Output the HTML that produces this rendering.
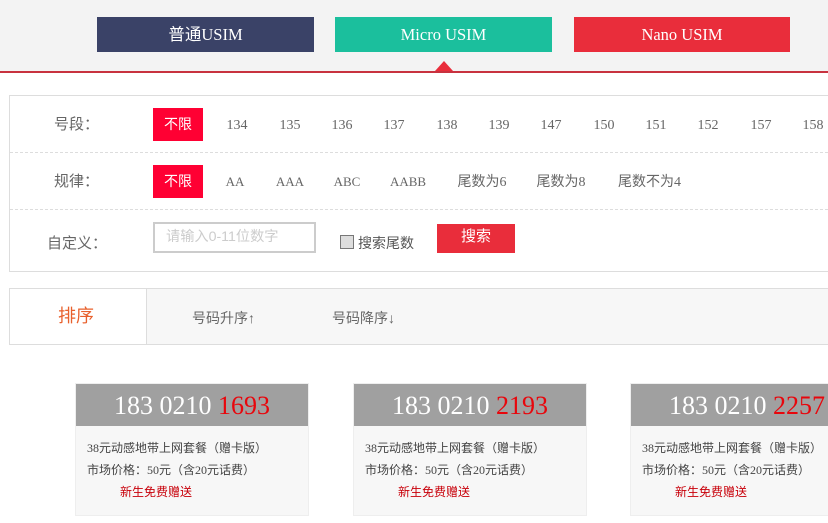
<!DOCTYPE html>
<html><head><meta charset="utf-8"><style>
html,body{margin:0;padding:0;background:#fff;}
#p{position:relative;width:828px;height:523px;overflow:hidden;background:#fff;font-family:"Liberation Serif","WenQuanYi Zen Hei","Noto Sans CJK SC",serif;color:#666;font-size:14px;}
#p div,#p span{position:absolute;white-space:nowrap;}
.t{top:17px;height:35px;line-height:36px;color:#fff;text-align:center;font-size:16.5px;}
.n{width:60px;text-align:center;font-size:14px;line-height:20px;color:#666;}
.a{top:116px;}
.b{top:173px;}
.s{font-size:13px;top:172px;}
.l{font-size:15px;line-height:20px;color:#666;}
.x{left:153px;width:50px;height:33px;line-height:36px;background:#f03;color:#fff;text-align:center;font-size:14px;}
.c{top:383px;width:232px;height:131px;background:#f7f7f7;border:1px solid #eee;}
.h{left:0;top:0;width:232px;height:42px;background:#a0a0a0;color:#fff;text-align:center;font-size:26px;line-height:43px;}
.h b{font-weight:normal;color:#e8060c;}
.c .r{left:11px;font-size:12px;line-height:18px;color:#444;}
</style></head><body><div id="p">
<div style="left:0;top:0;width:828px;height:71px;background:#f3f3f3"></div>
<div style="left:0;top:71px;width:828px;height:2px;background:#c8323f"></div>
<div class="t" style="left:97px;width:217px;background:#3a4267">普通USIM</div>
<div class="t" style="left:335px;width:217px;background:#1bbf9d">Micro USIM</div>
<div class="t" style="left:574px;width:216px;background:#e92d3b">Nano USIM</div>
<div style="left:435px;top:61px;width:0;height:0;border-left:9px solid transparent;border-right:9px solid transparent;border-bottom:10px solid #e92d3b"></div>

<div style="left:9px;top:95px;width:830px;height:175px;border:1px solid #ddd"></div>
<div style="left:10px;top:152px;width:818px;border-top:1px dashed #ddd"></div>
<div style="left:10px;top:209px;width:818px;border-top:1px dashed #ddd"></div>

<div class="l" style="left:54px;top:115px">号段：</div>
<div class="l" style="left:54px;top:172px">规律：</div>
<div class="l" style="left:47px;top:234px">自定义：</div>

<div class="x" style="top:108px">不限</div>
<div class="x" style="top:165px">不限</div>

<div class="n a" style="left:207px">134</div>
<div class="n a" style="left:260px">135</div>
<div class="n a" style="left:312px">136</div>
<div class="n a" style="left:364px">137</div>
<div class="n a" style="left:417px">138</div>
<div class="n a" style="left:469px">139</div>
<div class="n a" style="left:521px">147</div>
<div class="n a" style="left:574px">150</div>
<div class="n a" style="left:626px">151</div>
<div class="n a" style="left:678px">152</div>
<div class="n a" style="left:731px">157</div>
<div class="n a" style="left:783px">158</div>

<div class="n s" style="left:205px">AA</div>
<div class="n s" style="left:260px">AAA</div>
<div class="n s" style="left:317px">ABC</div>
<div class="n s" style="left:378px">AABB</div>
<div class="n b" style="left:452px">尾数为6</div>
<div class="n b" style="left:531px">尾数为8</div>
<div class="n b" style="left:618px">尾数不为4</div>

<div style="left:153px;top:222px;width:159px;height:27px;border:2px solid #ccc;background:#fff"></div>
<div style="left:166px;top:227px;font-size:14.2px;line-height:20px;color:#ccc;font-family:'Liberation Sans','WenQuanYi Zen Hei',sans-serif">请输入0-11位数字</div>
<div style="left:340px;top:235px;width:12px;height:12px;border:1px solid #777;background:#ddd"></div>
<div style="left:358px;top:235px;font-size:14px;line-height:20px;color:#555">搜索尾数</div>
<div style="left:437px;top:224px;width:78px;height:29px;line-height:27px;background:#e92d3b;color:#fff;text-align:center;font-size:15px">搜索</div>

<div style="left:9px;top:288px;width:830px;height:55px;border:1px solid #ddd;background:#f7f7f7"></div>
<div style="left:10px;top:289px;width:136px;height:55px;background:#fff;border-right:1px solid #ddd"></div>
<div style="left:58px;top:305px;font-size:18px;line-height:22px;color:#e8602c">排序</div>
<div style="left:192px;top:310px;font-size:14px;line-height:20px;color:#666">号码升序↑</div>
<div style="left:332px;top:310px;font-size:14px;line-height:20px;color:#666">号码降序↓</div>

<div class="c" style="left:75px"><div class="h">183 0210 <b>1693</b></div>
<div class="r" style="top:55px">38元动感地带上网套餐（赠卡版）</div>
<div class="r" style="top:77px">市场价格：50元（含20元话费）</div>
<div class="r" style="top:99px;left:44px;color:#c8000a">新生免费赠送</div></div>

<div class="c" style="left:353px"><div class="h">183 0210 <b>2193</b></div>
<div class="r" style="top:55px">38元动感地带上网套餐（赠卡版）</div>
<div class="r" style="top:77px">市场价格：50元（含20元话费）</div>
<div class="r" style="top:99px;left:44px;color:#c8000a">新生免费赠送</div></div>

<div class="c" style="left:630px"><div class="h">183 0210 <b>2257</b></div>
<div class="r" style="top:55px">38元动感地带上网套餐（赠卡版）</div>
<div class="r" style="top:77px">市场价格：50元（含20元话费）</div>
<div class="r" style="top:99px;left:44px;color:#c8000a">新生免费赠送</div></div>
</div></body></html>
